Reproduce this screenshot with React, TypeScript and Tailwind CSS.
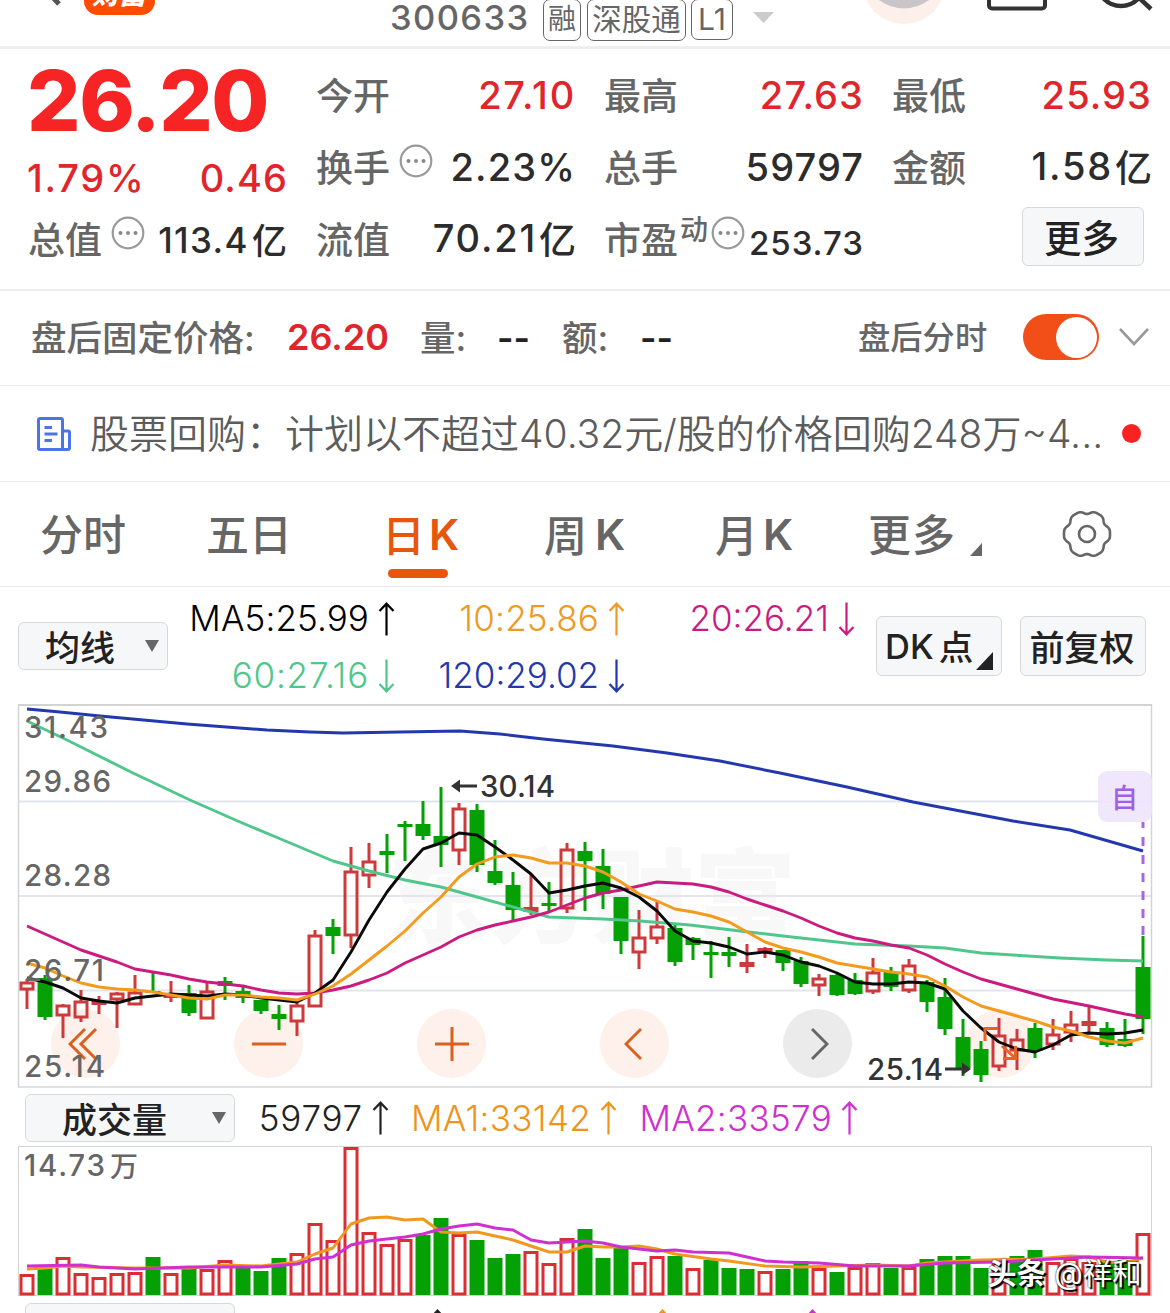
import type { ReactNode } from "react";

// [color, high, top, bottom, low] in chart pixels. "f" is a filled red body.
type Candle = ["r" | "g" | "f", number, number, number, number];

const candles: Candle[] = [
  ["r", 979, 983, 989, 1009], ["g", 975, 978, 1017, 1020], ["r", 1004, 1006, 1015, 1038],
  ["r", 990, 1002, 1017, 1022], ["f", 996, 1001, 1005, 1014], ["r", 992, 994, 999, 1028],
  ["r", 975, 993, 1004, 1005], ["g", 973, 991, 993, 993], ["f", 981, 993, 998, 1002],
  ["g", 985, 993, 1013, 1016], ["r", 981, 992, 1018, 1018], ["g", 977, 981, 986, 1000],
  ["g", 985, 991, 998, 1003], ["g", 1000, 1000, 1011, 1014], ["g", 1005, 1014, 1019, 1030],
  ["r", 1003, 1006, 1021, 1036], ["r", 930, 936, 1006, 1006], ["g", 919, 927, 936, 954],
  ["r", 847, 872, 935, 948], ["r", 843, 862, 875, 888], ["g", 834, 851, 855, 873],
  ["g", 821, 824, 827, 861], ["g", 801, 824, 836, 840], ["g", 787, 836, 845, 867],
  ["r", 803, 809, 850, 865], ["g", 804, 810, 865, 872], ["g", 840, 871, 883, 885],
  ["g", 872, 885, 910, 920], ["f", 874, 907, 912, 915], ["g", 882, 903, 906, 912],
  ["r", 843, 850, 908, 913], ["g", 842, 851, 861, 911], ["g", 849, 866, 894, 909],
  ["g", 897, 897, 941, 954], ["r", 910, 938, 952, 969], ["r", 902, 927, 938, 944],
  ["g", 925, 928, 962, 966], ["g", 937, 938, 945, 960], ["g", 941, 952, 955, 978],
  ["g", 937, 952, 956, 967], ["f", 944, 962, 967, 973], ["f", 947, 948, 953, 958],
  ["g", 950, 950, 963, 971], ["g", 957, 961, 984, 987], ["r", 974, 979, 985, 996],
  ["g", 974, 975, 995, 996], ["g", 973, 980, 994, 995], ["r", 958, 973, 991, 994],
  ["g", 967, 972, 987, 991], ["r", 959, 966, 990, 993], ["g", 980, 982, 1002, 1012],
  ["g", 978, 997, 1029, 1035], ["g", 1019, 1037, 1068, 1076], ["g", 1041, 1049, 1075, 1082],
  ["r", 1018, 1036, 1066, 1071], ["r", 1029, 1040, 1050, 1070], ["g", 1023, 1028, 1051, 1058],
  ["r", 1019, 1035, 1044, 1050], ["r", 1011, 1025, 1032, 1042], ["f", 1006, 1021, 1026, 1032],
  ["g", 1022, 1028, 1045, 1047], ["g", 1019, 1039, 1046, 1047], ["g", 936, 967, 1019, 1034],
];

// top edge of each volume bar
const volumes =
  "r1274 g1265 r1257 r1273 r1277 r1273 r1272 g1257 r1273 g1268 r1269 r1260 g1268 g1271 g1258 r1253 r1223 r1240 r1147 r1232 r1244 r1239 g1235 g1218 r1234 g1240 g1258 g1254 r1251 r1263 r1238 g1229 g1258 g1248 r1262 r1256 g1256 r1268 g1260 g1268 g1269 r1271 g1269 g1261 r1268 g1272 r1267 r1263 g1268 r1267 g1259 g1256 g1256 g1268 r1262 g1256 g1250 r1262 r1258 r1262 g1262 g1260 r1233".split(" ");

const MA5 =
  "27,978 45,982 63,988 81,998 99,1001 117,1003 135,998 153,996 171,994 189,995 207,996 225,994 243,995 261,998 279,1000 297,1002 315,993 333,980 351,952 369,920 387,892 405,869 423,849 441,843 459,833 477,835 495,847 513,860 531,874 549,893 567,890 585,886 603,883 621,888 639,897 657,911 675,931 693,941 711,943 729,947 747,954 765,952 783,955 801,962 819,966 837,973 855,982 873,984 891,984 909,982 927,983 945,989 963,1011 981,1028 999,1042 1017,1049 1035,1052 1053,1045 1071,1035 1089,1033 1107,1034 1125,1033 1143,1030";
const MA10 =
  "27,963 45,968 63,976 81,983 99,987 117,989 135,990 153,992 171,995 189,998 207,999 225,995 243,995 261,997 279,998 297,1000 315,994 333,986 351,974 369,960 387,946 405,931 423,913 441,897 459,877 477,864 495,857 513,855 531,858 549,863 567,863 585,866 603,872 621,882 639,894 657,901 675,909 693,912 711,916 729,922 747,932 765,942 783,948 801,952 819,957 837,963 855,966 873,969 891,972 909,974 927,977 945,986 963,997 981,1006 999,1011 1017,1016 1035,1021 1053,1027 1071,1031 1089,1037 1107,1041 1125,1043 1143,1038";
const MA20 =
  "27,926 45,934 63,942 81,950 99,956 117,962 135,969 153,972 171,975 189,979 207,982 225,984 243,986 261,990 279,993 297,994 315,993 333,990 351,986 369,980 387,973 405,963 423,955 441,947 459,937 477,930 495,925 513,921 531,917 549,912 567,905 585,898 603,893 621,890 639,886 657,882 693,884 711,887 729,892 747,899 765,905 783,911 801,918 819,926 837,933 855,938 873,941 891,945 909,948 927,955 945,964 963,972 981,979 1017,989 1053,999 1089,1006 1125,1014 1143,1017";
const MA60 =
  "27,721 67,740 133,773 190,800 240,822 283,840 333,861 369,871 405,880 441,887 477,897 513,907 549,917 603,919 640,921 690,925 740,931 783,936 819,940 855,944 909,946 945,948 981,953 1013,955 1060,958 1107,960 1143,961";
const MA120 =
  "27,709 60,712 100,716 187,724 267,730 310,732 343,733 400,732 460,731 500,734 543,739 613,746 667,753 720,761 780,773 847,787 913,802 1013,821 1070,830 1143,851";
const VMA1 =
  "27,1269 45,1268 63,1266 81,1267 135,1268 189,1268 225,1265 261,1266 279,1264 297,1262 315,1254 333,1248 351,1224 369,1218 387,1217 405,1220 423,1219 441,1232 459,1233 477,1232 495,1236 513,1240 531,1246 549,1252 567,1252 585,1246 603,1247 621,1247 639,1246 657,1249 675,1254 711,1259 729,1261 765,1266 801,1267 837,1266 873,1265 909,1266 927,1263 945,1262 981,1260 1035,1259 1071,1256 1089,1257 1107,1262 1125,1263 1143,1258";
const VMA2 =
  "27,1266 81,1265 99,1267 135,1269 189,1267 225,1267 261,1267 297,1264 315,1259 333,1257 351,1245 369,1241 405,1237 423,1234 441,1229 459,1226 477,1224 495,1228 513,1230 531,1240 549,1243 567,1242 585,1241 603,1243 621,1247 657,1251 675,1250 693,1252 729,1253 747,1257 765,1261 783,1262 819,1263 855,1266 909,1266 945,1263 999,1262 1053,1259 1089,1257 1143,1258";

const x = (i: number) => 27 + 18 * i;

function Line({ points, color }: { points: string; color: string }) {
  return <polyline points={points} fill="none" stroke={color} strokeWidth="2.9" strokeLinejoin="round" />;
}

function InfoDots() {
  return (
    <svg width="34" height="34" viewBox="0 0 34 34" className="shrink-0">
      <circle cx="17" cy="17" r="15.3" fill="none" stroke="#999" strokeWidth="2.2" />
      <circle cx="9.5" cy="17" r="2" fill="#888" />
      <circle cx="17" cy="17" r="2" fill="#888" />
      <circle cx="24.5" cy="17" r="2" fill="#888" />
    </svg>
  );
}

function Arrow({ down = false }: { down?: boolean }) {
  return (
    <svg width="17" height="34" viewBox="0 0 17 34" fill="none" stroke="currentColor" strokeWidth="2.2" className="shrink-0">
      {down ? <path d="M8.5 0.5V32M1.5 25L8.5 32.3L15.5 25" /> : <path d="M8.5 33.5V2M1.5 9L8.5 1.7L15.5 9" />}
    </svg>
  );
}

function Gear() {
  const pts = Array.from({ length: 120 }, (_, k) => {
    const t = (k * Math.PI) / 60;
    const r = 22 + 1.5 * Math.cos(6 * t) - 0.5 * Math.cos(12 * t);
    return `${(26 + r * Math.cos(t)).toFixed(1)},${(26 + r * Math.sin(t)).toFixed(1)}`;
  });
  return (
    <svg width="52" height="52" viewBox="0 0 52 52" fill="none" stroke="#666" strokeWidth="2.6">
      <polygon points={pts.join(" ")} strokeLinejoin="round" />
      <circle cx="26" cy="26" r="8" />
    </svg>
  );
}

function Row({ label, children }: { label: ReactNode; children: ReactNode }) {
  return (
    <div className="flex h-[72px] items-center justify-between whitespace-nowrap">
      <span className="flex items-center pt-[4px] text-[37px] text-[#666]">{label}</span>
      {children}
    </div>
  );
}

// values with a narrow "1" get looser tracking
function Value({ children, unit, className = "" }: { children: string; unit?: string; className?: string }) {
  return (
    <span className={`-mr-px text-[38px] ${children.includes("1") ? "tracking-[1.8px]" : "tracking-[1.1px]"} ${className}`}>
      {children}
      {unit && <span className="ml-[2px] align-[-2px] text-[37px] tracking-normal">{unit}</span>}
    </span>
  );
}

function MaValue({ text, down, className }: { text: string; down?: boolean; className: string }) {
  return (
    <div className={`flex items-center justify-end gap-[9px] ${className}`}>
      <span>{text}</span>
      <Arrow down={down} />
    </div>
  );
}

function PriceChart() {
  return (
    <svg width="1170" height="384" viewBox="0 704 1170 384" className="relative block font-medium">
      <g stroke="#e3e5ec" strokeWidth="2">
        <path d="M19 801.5H1151M19 896H1151M19 990.5H1151" />
      </g>
      <rect x="18.5" y="705" width="1133" height="382" fill="none" stroke="#d2d3d5" strokeWidth="1.4" />
      <path d="M18 705H1152" stroke="#d2d3d5" strokeWidth="2" />
      {candles.map(([c, high, top, bottom, low], i) => {
        const color = c === "g" ? "#04a004" : "#cc3a3d";
        return (
          <g key={i} stroke={color} strokeWidth="3">
            <path d={`M${x(i)} ${high}V${top}M${x(i)} ${bottom}V${low}`} />
            {c === "r" ? (
              <rect x={x(i) - 6} y={top} width="12" height={bottom - top} fill="none" />
            ) : (
              <rect x={x(i) - 7.5} y={top} width="15" height={bottom - top} fill={color} stroke="none" />
            )}
          </g>
        );
      })}
      <Line points={MA120} color="#2338ac" />
      <Line points={MA60} color="#4fc78c" />
      <Line points={MA20} color="#cb1a80" />
      <Line points={MA5} color="#0a0a0a" />
      <Line points={MA10} color="#f49a1c" />

      <g fontSize="29.5" fill="#666">
        <text x="24" y="738" textLength="84">31.43</text>
        <text x="24" y="791.5" textLength="87">29.86</text>
        <text x="24" y="886" textLength="87">28.28</text>
        <text x="24" y="981" textLength="80">26.71</text>
        <text x="24" y="1077" textLength="81">25.14</text>
      </g>
      <g fontSize="29.5" fill="#333">
        <text x="480" y="796.5" textLength="75">30.14</text>
        <text x="867" y="1079.5" textLength="76">25.14</text>
        <path d="M451 786L460 779.5V784.5H477V787.5H460V792.5Z" />
        <path d="M971 1069L962 1062.5V1067.5H945V1070.5H962V1075.5Z" />
      </g>

      <rect x="1098" y="771" width="54" height="51" rx="9" fill="#efe3fd" fillOpacity="0.85" />
      <text x="1111" y="808" fontSize="27" fill="#a05fe8">自</text>
      <path d="M1143 822v6m0 9v9m0 9v9m0 9v9m0 9v9m0 9v9m0 8v9" stroke="#a468e6" strokeWidth="3" />

      <g fill="none" stroke="#e8641e" strokeWidth="3">
        <path d="M985 1041V1028.5H998M1002 1046L1014 1057M1003 1058.5H1015.5V1046" />
      </g>
    </svg>
  );
}

function VolumeChart() {
  return (
    <svg width="1170" height="150" viewBox="0 1146 1170 150" className="block">
      <rect x="18.5" y="1146.5" width="1133" height="149" fill="none" stroke="#d2d3d5" />
      {volumes.map((v, i) => {
        const top = Number(v.slice(1));
        return v[0] === "r" ? (
          <rect key={i} x={x(i) - 6} y={top + 1.5} width="12" height={1292.5 - top} fill="#fff" stroke="#d92f34" strokeWidth="3" />
        ) : (
          <rect key={i} x={x(i) - 7.5} y={top} width="15" height={1295 - top} fill="#04a004" />
        );
      })}
      <Line points={VMA1} color="#f0981f" />
      <Line points={VMA2} color="#cf30cf" />
      <text x="24" y="1176" fontSize="29.5" fill="#666" fontWeight="500" textLength="81">14.73</text>
      <text x="110" y="1177" fontSize="28" fill="#666" fontWeight="500">万</text>
    </svg>
  );
}

const circle = "flex size-[69px] items-center justify-center rounded-full bg-[#fef0ea]";
const panelButton = "flex items-center rounded-[6px] border-[1.5px] border-[#d6d8da] bg-[#f6f7f9] font-medium text-[#222]";

export default function App() {
  return (
    <div className="h-[1313px] w-[1170px] overflow-hidden bg-white font-['Inter','Noto_Sans_CJK_SC',sans-serif] text-[#2c2c2c]">
      {/* header */}
      <header className="relative h-[49px] overflow-hidden border-b-[3px] border-[#eee]">
        <svg width="1170" height="46" viewBox="0 0 1170 46" fill="none" className="absolute">
          <path d="M44 -12L59 4" stroke="#555" strokeWidth="5" />
          <rect x="84" y="-30" width="71" height="45" rx="14" fill="#ff4c00" />
          <path d="M753 12H774L763.5 23Z" fill="#ccc" />
          <circle cx="904" cy="-18" r="42" fill="#fdf0ea" />
          <path d="M876 -2Q904 19 932 -2Z" fill="#c9c5c9" />
          <rect x="989" y="-30" width="56" height="38.5" rx="3" stroke="#333" strokeWidth="4" />
          <circle cx="1121" cy="-18" r="24" stroke="#333" strokeWidth="4.5" />
          <path d="M1136 -5L1151 9" stroke="#333" strokeWidth="4.5" />
        </svg>
        <div className="relative -mt-[23px] ml-[92px] w-[60px] text-[27px] leading-[36px] font-black text-white italic">财富</div>
        <div className="relative -mt-[14px] ml-[390px] flex items-start text-[#666]">
          <span className="mt-[1px] w-[153px] text-[34.5px] leading-[36px] font-medium tracking-[1.4px]">300633</span>
          <span className="mr-[6px] h-[42px] w-[38px] rounded-[7px] border-[1.5px] border-[#666] text-center text-[28px] leading-[39px]">融</span>
          <span className="mr-[5px] h-[42px] w-[99px] rounded-[7px] border-[1.5px] border-[#666] text-center text-[29.5px] leading-[39px]">深股通</span>
          <span className="h-[41px] w-[42px] rounded-[7px] border-[1.5px] border-[#666] text-center text-[30px] leading-[38px]">L1</span>
        </div>
      </header>

      {/* quote */}
      <section className="grid h-[242px] grid-cols-[259px_259px_259px_259px] gap-x-[29px] border-b-2 border-[#ececec] pt-[10px] pl-[28px] text-[37px] font-medium">
        <div className="text-[#e0262c]">
          <div className="-ml-[1px] h-[84px] text-[84px] leading-[84px] font-extrabold tracking-[-1.4px] text-[#f62424]">26.20</div>
          <div className="flex h-[60px] items-center justify-between pt-[10px]">
            <Value className="-ml-[1px]">1.79%</Value>
            <Value>0.46</Value>
          </div>
          <Row label={<>总值<span className="-mt-[17px] ml-[9px]"><InfoDots /></span></>}>
            <span className="pt-[4px] text-[35px] tracking-[1.4px] text-[#2c2c2c]">
              113.4<span className="ml-[3px] align-[-1px] tracking-normal">亿</span>
            </span>
          </Row>
        </div>
        <div>
          <Row label="今开"><Value className="text-[#e0262c]">27.10</Value></Row>
          <Row label={<>换手<span className="-mt-[17px] ml-[9px]"><InfoDots /></span></>}><Value>2.23%</Value></Row>
          <Row label="流值"><Value unit="亿">70.21</Value></Row>
        </div>
        <div>
          <Row label="最高"><Value className="text-[#e0262c]">27.63</Value></Row>
          <Row label="总手"><Value>59797</Value></Row>
          <Row label={<>市盈<span className="-mt-[22px] ml-[2px] text-[28px]">动</span><span className="-mt-[17px] ml-[3px]"><InfoDots /></span></>}>
            <span className="-mr-px pt-[10px] text-[33px] tracking-[1px]">253.73</span>
          </Row>
        </div>
        <div>
          <Row label="最低"><Value className="text-[#e0262c]">25.93</Value></Row>
          <Row label="金额"><Value unit="亿">1.58</Value></Row>
          <button className={`${panelButton} mt-[4px] ml-[130px] h-[59px] w-[122px] justify-center pt-[5px] pr-[3px] text-[37.5px]`}>更多</button>
        </div>
      </section>

      {/* after-hours */}
      <section className="flex h-[95px] items-center border-b-[1.5px] border-[#ebebeb] pb-[2px] pl-[31px] text-[35.5px] font-medium whitespace-nowrap text-[#666]">
        <span className="w-[256px] pt-[4px]">盘后固定价格:</span>
        <span className="w-[133px] text-[36px] font-semibold text-[#e0262c]">26.20</span>
        <span className="w-[77px] pt-[4px]">量:</span>
        <span className="w-[65px] pt-[4px] font-semibold text-[#222]">--</span>
        <span className="w-[78px] pt-[4px]">额:</span>
        <span className="w-[218px] pt-[4px] font-semibold text-[#222]">--</span>
        <span className="w-[165px] pt-[3px] text-[32.3px]">盘后分时</span>
        <span className="flex h-[46px] w-[76px] items-center justify-end rounded-full bg-[#f24e17] pr-[2px]">
          <span className="size-[41px] rounded-full bg-white" />
        </span>
        <svg width="32" height="20" viewBox="0 0 32 20" fill="none" stroke="#999" strokeWidth="2.6" className="ml-[19px]">
          <path d="M2 2L16 17L30 2" />
        </svg>
      </section>

      {/* notice */}
      <section className="flex h-[96px] items-center border-b-[1.5px] border-[#ebebeb] pl-[36px]">
        <svg width="36" height="36" viewBox="0 0 36 36" fill="none" stroke="#4a74e8" strokeWidth="3">
          <path d="M26.5 33.5H4Q2.5 33.5 2.5 32V4Q2.5 2.5 4 2.5H25Q26.5 2.5 26.5 4V33.5H32Q33.5 33.5 33.5 32V16.5Q33.5 15 32 15H27" />
          <path d="M8.5 11.5H16M8.5 18H21.5M8.5 24.5H16" />
        </svg>
        <span className="ml-[18px] w-[1032px] pt-[2px] text-[39px] font-[350] whitespace-nowrap text-[#5c5c5c]">
          股票回购：计划以不超过40.32元/股的价格回购248万~4...
        </span>
        <span className="size-[19px] rounded-full bg-[#f92222]" />
      </section>

      {/* period tabs */}
      <nav className="flex h-[105px] items-center border-b-[1.5px] border-[#ebebeb] pl-[40px] text-[43px] font-medium whitespace-nowrap text-[#666]">
        <span className="w-[166px] pt-[2px]">分时</span>
        <span className="w-[176px] pt-[2px]">五日</span>
        <span className="relative w-[162px] pt-[2px] text-[#e8550c]">
          日<span className="ml-[4px] align-[2px] font-semibold">K</span>
          <span className="absolute top-[69px] left-[6px] h-[9px] w-[60px] rounded-full bg-[#e8550c]" />
        </span>
        <span className="w-[171px] pt-[2px]">周<span className="ml-[8px] align-[2px] font-semibold">K</span></span>
        <span className="w-[153px] pt-[2px]">月<span className="ml-[5px] align-[2px] font-semibold">K</span></span>
        <span className="w-[102px] pt-[2px] tracking-[1px]">更多</span>
        <svg width="12" height="13" className="mt-[30px] mr-[79px]"><path d="M12 0V13H0Z" fill="#666" /></svg>
        <Gear />
      </nav>

      {/* MA legend */}
      <section className="flex h-[117px] items-start pl-[18px]">
        <button className={`${panelButton} mt-[35px] h-[48px] w-[150px] justify-between pt-[4px] pr-[8px] pl-[26px] text-[35px]`}>
          均线
          <svg width="14" height="12" className="-mt-[5px]"><path d="M0 0H14L7 12Z" fill="#666" /></svg>
        </button>
        <div className="ml-[10px] grid w-[678px] grid-cols-[217px_230px_230px] pt-[3px] text-[35px] leading-[57px] font-light whitespace-nowrap">
          <MaValue text="MA5:25.99" className="tracking-[0.1px] text-black" />
          <MaValue text="10:25.86" className="tracking-[0.2px] text-[#ee9a26]" />
          <MaValue text="20:26.21" down className="text-[#cb1a80]" />
          <MaValue text="60:27.16" down className="tracking-[0.8px] text-[#4fc78c]" />
          <MaValue text="120:29.02" down className="text-[#2338ac]" />
        </div>
        <button className={`${panelButton} relative mt-[29px] ml-[20px] h-[60px] w-[126px] pt-[2px] pl-[8px] text-[34.5px]`}>
          DK<span className="ml-[5px] pt-[2px]">点</span>
          <svg width="17" height="18" className="absolute right-[8px] bottom-[5px]"><path d="M17 0V18H0Z" fill="#222" /></svg>
        </button>
        <button className={`${panelButton} mt-[29px] ml-[18px] h-[60px] w-[126px] justify-center pt-[4px] pr-[2px] text-[35px]`}>前复权</button>
      </section>

      {/* candles */}
      <section className="relative h-[384px]">
        <div className="absolute top-[118px] left-[388px] text-[102px] font-black whitespace-nowrap text-[#f8f8f8]">东方财富</div>
        <div className="absolute top-[305px] left-[51px] flex gap-[114px] text-[#d9601f]">
          <span className={circle}>
            <svg width="30" height="34" viewBox="0 0 30 34" fill="none" stroke="currentColor" strokeWidth="3" className="-ml-[6px]"><path d="M17 2L2 17L17 32M28 2L13 17L28 32" /></svg>
          </span>
          <span className={circle}>
            <svg width="34" height="4"><path d="M0 2H34" stroke="currentColor" strokeWidth="3" /></svg>
          </span>
          <span className={circle}>
            <svg width="34" height="34"><path d="M0 17H34M17 0V34" stroke="currentColor" strokeWidth="3" /></svg>
          </span>
          <span className={circle}>
            <svg width="18" height="34" fill="none" className="-ml-[4px]"><path d="M17 2L2 17L17 32" stroke="currentColor" strokeWidth="3" /></svg>
          </span>
          <span className="flex size-[69px] items-center justify-center rounded-full bg-[#ebebeb] text-[#666]">
            <svg width="18" height="34" fill="none" className="ml-[4px]"><path d="M1 2L16 17L1 32" stroke="currentColor" strokeWidth="3" /></svg>
          </span>
          <span className={circle} />
        </div>
        <PriceChart />
      </section>

      {/* volume legend */}
      <section className="flex h-[58px] items-center pt-[2px] pl-[25px] text-[35px] font-light whitespace-nowrap">
        <button className={`${panelButton} h-[48px] w-[210px] justify-between pt-[4px] pr-[8px] pl-[36px] text-[35px]`}>
          成交量
          <svg width="14" height="12" className="-mt-[5px]"><path d="M0 0H14L7 12Z" fill="#666" /></svg>
        </button>
        <MaValue text="59797" className="w-[154px] tracking-[0.8px] text-[#222]" />
        <MaValue text="MA1:33142" className="w-[228px] tracking-[0.3px] text-[#ee941c]" />
        <MaValue text="MA2:33579" className="w-[241px] tracking-[0.3px] text-[#cf30cf]" />
      </section>

      <section className="relative">
        <VolumeChart />
        <div className="absolute top-[106px] left-[987px] text-[29.5px] leading-[42px] whitespace-nowrap text-white [text-shadow:2px_2px_1px_#000,0_0_2px_#000]">
          <span className="font-bold">头条</span> @祥和
        </div>
      </section>

      {/* next indicator, cut off by the fold */}
      <section className="flex pt-[7px] pl-[25px]">
        <div className={`${panelButton} h-[48px] w-[210px]`} />
        <div className="ml-[194px] flex pt-[6px]">
          <span className="w-[225px] text-[#222]"><Arrow /></span>
          <span className="w-[150px] text-[#ee941c]"><Arrow /></span>
          <span className="text-[#cf30cf]"><Arrow /></span>
        </div>
      </section>
    </div>
  );
}
